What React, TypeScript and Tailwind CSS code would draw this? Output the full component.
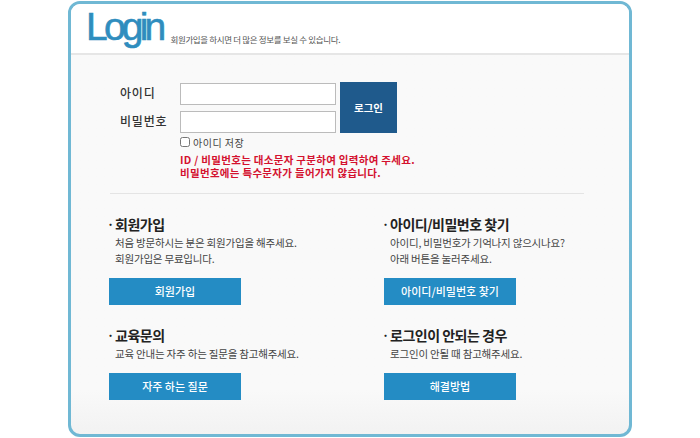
import React from 'react';

const kr = "font-['Noto_Sans_CJK_KR','Noto_Sans',sans-serif]";

const sections = [
  [
    { title: '회원가입', lines: ['처음 방문하시는 분은 회원가입을 해주세요.', '회원가입은 무료입니다.'], button: '회원가입' },
    { title: '아이디/비밀번호 찾기', lines: ['아이디, 비밀번호가 기억나지 않으시나요?', '아래 버튼을 눌러주세요.'], button: '아이디/비밀번호 찾기' },
  ],
  [
    { title: '교육문의', lines: ['교육 안내는 자주 하는 질문을 참고해주세요.'], button: '자주 하는 질문' },
    { title: '로그인이 안되는 경우', lines: ['로그인이 안될 때 참고해주세요.'], button: '해결방법' },
  ],
];

const InfoBlock = ({ title, lines, button }: { title: string; lines: string[]; button: string }) => (
  <div className="w-[275px] shrink-0">
    <h3 className="flex h-[20px] items-center text-[14px] font-bold tracking-[-0.5px] text-[#222]">
      <span className="-ml-[2px] w-[8px] text-[12px]">·</span>
      {title}
    </h3>
    <div className="mt-[1px] pl-[6px] text-[10.5px] leading-[16px] tracking-[-0.2px] text-[#444]">
      {lines.map((line) => (
        <p key={line}>{line}</p>
      ))}
    </div>
    <button className="mt-[11px] flex h-[27px] w-[132px] items-center justify-center bg-[#248cc4] text-[11px] font-medium text-white">
      {button}
    </button>
  </div>
);

export default function App() {
  return (
    <div className={`h-[438px] w-[700px] bg-white pt-[1px] pl-[68px] ${kr}`}>
      <div className="h-[436px] w-[564px] overflow-hidden rounded-[12px] border-[3px] border-[#70b8d4] bg-gradient-to-b from-[#f9f9f9] from-90% to-[#f2f2f2]">
        {/* header */}
        <div className="flex h-[51px] items-end border-b-2 border-[#e6e6e6] bg-white pl-[15px]">
          <span className="mb-[4px] font-['Liberation_Sans',sans-serif] text-[39px] leading-[44px] tracking-[-3.8px] text-[#2f8dbe] [-webkit-text-stroke:0.6px_#2f8dbe]">
            Login
          </span>
          <span className="mb-[8px] ml-[8px] text-[8.5px] leading-[12px] tracking-[-0.35px] text-[#555]">
            회원가입을 하시면 더 많은 정보를 보실 수 있습니다.
          </span>
        </div>

        {/* login form */}
        <div className="mr-[45px] ml-[39px] border-b border-[#e4e4e4] pt-[27px] pb-[14px]">
          <div className="flex">
            <div className="w-[70px] pl-[10px] text-[12px] font-medium tracking-[0.8px] text-[#333]">
              <div className="flex h-[22px] items-center">아이디</div>
              <div className="mt-[6px] flex h-[22px] items-center">비밀번호</div>
            </div>
            <div className="flex w-[156px] flex-col gap-[6px] pt-[1px]">
              <input className="h-[22px] border border-[#bbb] bg-white" />
              <input className="h-[22px] border border-[#bbb] bg-white" />
            </div>
            <button className="ml-[4px] h-[51px] w-[57px] bg-[#1f5a8c] text-[10.5px] font-bold text-white">
              로그인
            </button>
          </div>
          <div className="ml-[70px]">
            <label className="mt-[2px] flex h-[14px] items-center gap-[3px] text-[10px] tracking-[0.5px] text-[#444]">
              <input type="checkbox" className="m-0 h-[10px] w-[10px]" />
              아이디 저장
            </label>
            <p className="mt-[4px] text-[10.5px] leading-[13px] font-bold tracking-[0.3px] whitespace-nowrap text-[#d4112f]">
              ID / 비밀번호는 대소문자 구분하여 입력하여 주세요.
              <br />
              비밀번호에는 특수문자가 들어가지 않습니다.
            </p>
          </div>
        </div>

        {/* info sections */}
        <div className="flex flex-col gap-[20px] pt-[20px] pl-[38px]">
          {sections.map((row, index) => (
            <div key={index} className="flex">
              {row.map((item) => (
                <InfoBlock key={item.title} {...item} />
              ))}
            </div>
          ))}
        </div>
      </div>
    </div>
  );
}
